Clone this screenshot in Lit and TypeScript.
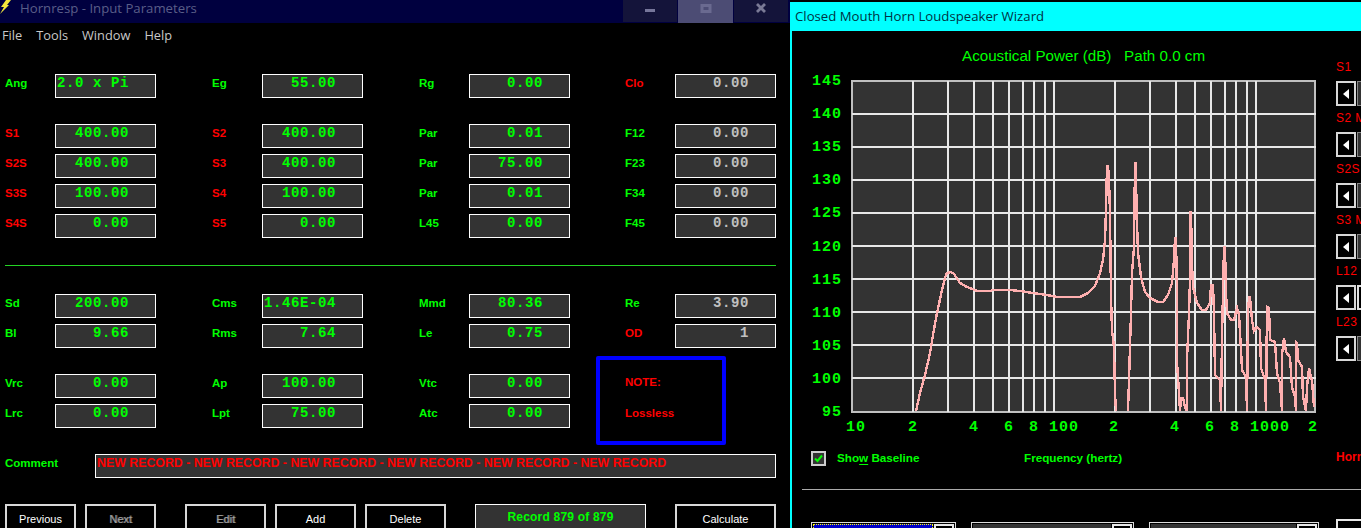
import { LitElement, html, svg, css } from "lit";
import { customElement } from "lit/decorators.js";

type Field = [string, string, string?, string?];

const GROUP_TOP: Field[] = [
  ["Ang", "2.0 x Pi"], ["Eg", "55.00"], ["Rg", "0.00"], ["Clo", "0.00", "red", "dim"],
];
const GROUP_THROAT: Field[] = [
  ["S1", "400.00", "red"], ["S2", "400.00", "red"], ["Par", "0.01"], ["F12", "0.00", "", "dim"],
  ["S2S", "400.00", "red"], ["S3", "400.00", "red"], ["Par", "75.00"], ["F23", "0.00", "", "dim"],
  ["S3S", "100.00", "red"], ["S4", "100.00", "red"], ["Par", "0.01"], ["F34", "0.00", "", "dim"],
  ["S4S", "0.00", "red"], ["S5", "0.00", "red"], ["L45", "0.00"], ["F45", "0.00", "", "dim"],
];
const GROUP_DRIVER: Field[] = [
  ["Sd", "200.00"], ["Cms", "1.46E-04"], ["Mmd", "80.36"], ["Re", "3.90", "", "dim"],
  ["Bl", "9.66"], ["Rms", "7.64"], ["Le", "0.75"], ["OD", "1", "red", "dim"],
];
const GROUP_CHAMBER: Field[] = [
  ["Vrc", "0.00"], ["Ap", "100.00"], ["Vtc", "0.00"],
  ["Lrc", "0.00"], ["Lpt", "75.00"], ["Atc", "0.00"],
];

const SLIDERS = ["S1", "S2 Mmd", "S2S", "S3 Mmd", "L12", "L23"];

const fx = (f: number) => Math.round(852 + 202 * Math.log10(f / 10));
const GRID_FREQS = [20, 30, 40, 50, 60, 70, 80, 90, 100, 200, 300, 400, 500, 600, 700, 800, 900, 1000];
const GRID_DB = [1, 2, 3, 4, 5, 6, 7, 8, 9].map((i) => Math.round(80.5 + i * 33.1));
const Y_LABELS = [145, 140, 135, 130, 125, 120, 115, 110, 105, 100, 95];
const X_LABELS: [string, number][] = [
  ["10", 856], ["2", 913], ["4", 974], ["6", 1009], ["8", 1034], ["100", 1064],
  ["2", 1114], ["4", 1175], ["6", 1210], ["8", 1235], ["1000", 1270], ["2", 1313],
];

// traced from the plot, page coordinates
const CURVE = `916,411 920,393 925,375 930,353 933,335 937,313 942,290 945,278 947,273 951,272 954,274 960,283 967,287
977,291 990,291 993,290 1010,290 1020,291 1033,293 1047,295 1057,297 1080,297 1088,293 1095,286 1100,273 1103,260
1105,240 1106,210 1107,166 1108,166 1109,180 1110,213 1111,297 1112,330 1114,347 1115,393 1116,411 1128,411 1129,380
1130,347 1131,313 1132,273 1134,247 1135,163 1136,163 1136,180 1137,223 1138,253 1141,277 1145,292 1150,298 1158,302
1163,302 1168,295 1172,283 1174,260 1175,238 1176,238 1177,297 1177,362 1179,393 1180,411 1181,398 1183,398 1185,407
1187,411 1187,360 1189,313 1190,280 1190,212 1191,212 1192,263 1193,287 1197,303 1202,310 1206,310 1210,303 1211,285
1213,285 1214,313 1215,375 1220,380 1221,411 1222,337 1223,292 1224,247 1225,247 1226,293 1227,313 1231,320 1234,320
1237,308 1239,315 1241,350 1242,370 1246,377 1247,411 1248,313 1249,297 1250,297 1252,320 1254,331 1257,327 1260,330
1261,368 1265,380 1266,411 1267,307 1269,308 1270,340 1275,342 1277,373 1280,383 1282,411 1282,355 1284,338 1286,352
1290,357 1292,387 1295,397 1296,411 1296,342 1297,343 1298,360 1302,367 1303,397 1306,411 1307,387 1309,368 1311,378
1312,380 1314,407`;

// the curve leaves the plot at the bottom edge, so cut it there instead of running along the axis
function curveSegments(): string[] {
  const segments: string[] = [];
  let current: string[] = [];
  for (const p of CURVE.trim().split(/\s+/)) {
    const atBottom = p.endsWith(",411");
    if (atBottom && current.length === 1 && current[0].endsWith(",411")) {
      current = [p];
      continue;
    }
    current.push(p);
    if (atBottom && current.length > 1) {
      segments.push(current.join(" "));
      current = [p];
    }
  }
  if (current.length > 1) segments.push(current.join(" "));
  return segments;
}

@customElement("app-root")
export class AppRoot extends LitElement {
  static styles = css`
    :host {
      display: flex;
      width: 1361px;
      height: 528px;
      overflow: hidden;
      background: #000;
      font-family: "Liberation Sans", Arial, sans-serif;
    }
    .hornresp {
      width: 790px;
      flex: none;
    }
    .titlebar {
      display: flex;
      height: 23px;
      background: #00003f;
      color: #5a5e88;
      font: 13.2px/16px "Open Sans", sans-serif;
    }
    .bolt {
      width: 20px;
      flex: none;
    }
    .titlebar .caption {
      flex: 1;
    }
    .winbtn {
      width: 54px;
      height: 22px;
      margin-left: 1px;
      background: #14143a;
      display: flex;
      justify-content: center;
    }
    .winbtn.hover {
      width: 55px;
      height: 23px;
      background: #4c4c74;
    }
    .winbtn:last-child {
      margin-right: 2px;
    }
    .menu {
      display: flex;
      gap: 14px;
      height: 24px;
      padding-left: 2px;
      color: #c8c8c8;
      font: 12.8px/24px "Open Sans", sans-serif;
    }
    .fields {
      display: grid;
      grid-template-columns: 207px 207px 206px 151px;
      align-content: start;
      row-gap: 6px;
      padding-left: 5px;
    }
    .fields.top {
      margin-top: 27px;
    }
    .fields.throat {
      margin-top: 26px;
    }
    .fields.driver {
      margin-top: 28px;
    }
    .fields.chamber {
      grid-template-columns: 207px 207px 177px;
      padding-top: 18px;
    }
    .field {
      display: flex;
      align-items: flex-start;
    }
    .label {
      width: 50px;
      color: #00ff00;
      font-size: 11.5px;
      font-weight: bold;
      line-height: 18px;
    }
    .label.red {
      color: #ff0000;
    }
    .value {
      box-sizing: border-box;
      width: 101px;
      height: 24px;
      padding-right: 26px;
      border: 1px solid #fff;
      background: #333;
      color: #00ff00;
      text-align: right;
      font: bold 14px/17px "Liberation Mono", monospace;
      letter-spacing: 0.6px;
      white-space: pre;
    }
    .value.dim {
      color: #c0c0c0;
    }
    .rule {
      height: 1px;
      margin: 27px 14px 0 5px;
      background: #24d424;
    }
    .lower {
      display: flex;
      margin-top: 8px;
    }
    .note {
      box-sizing: border-box;
      width: 130px;
      height: 89px;
      padding: 13px 0 0 25px;
      border: 4px solid #0000ff;
      border-radius: 2px;
      color: #ff0000;
      font-size: 11.5px;
      font-weight: bold;
      line-height: 18px;
    }
    .note div + div {
      margin-top: 13px;
    }
    .comment {
      display: flex;
      margin: 9px 14px 0 5px;
    }
    .comment .label {
      width: 90px;
    }
    .comment .text {
      box-sizing: border-box;
      flex: 1;
      height: 24px;
      padding-left: 1px;
      border: 1px solid #fff;
      background: #333;
      color: #ff0000;
      font-size: 12.35px;
      font-weight: bold;
      line-height: 16px;
      white-space: nowrap;
    }
    .buttons {
      display: flex;
      margin: 26px 0 0 5px;
    }
    .btn {
      box-sizing: border-box;
      width: 71px;
      height: 30px;
      margin-right: 9px;
      border: 2px solid #d8d8d8;
      background: #000;
      color: #fff;
      font-size: 11px;
      line-height: 26px;
      text-align: center;
    }
    .btn.wide {
      width: 81px;
    }
    .btn.next {
      margin-right: 29px;
    }
    .btn.off {
      color: #a0a0a0;
      text-shadow: 1px 0 #666;
    }
    .btn.calc {
      width: 101px;
      margin: 0;
    }
    .record {
      box-sizing: border-box;
      width: 171px;
      height: 30px;
      margin: 0 29px 0 20px;
      border: 1px solid #fff;
      background: #333;
      color: #00ff00;
      font-size: 12px;
      font-weight: bold;
      line-height: 25px;
      text-align: center;
      letter-spacing: 0.2px;
    }

    .wizard {
      flex: 1;
      min-width: 0;
      height: 526px;
      margin-top: 2px;
      border-left: 2px solid #00ffff;
      overflow: hidden;
    }
    .wizard-title {
      height: 29px;
      margin-left: -2px;
      padding-left: 5px;
      background: #00ffff;
      color: #003344;
      font: 13.2px/29px "Open Sans", sans-serif;
    }
    .upper {
      display: flex;
      height: 458px;
    }
    .main {
      width: 544px;
      flex: none;
    }
    .plot-title {
      margin: 16px 0 0 170px;
      color: #00ff00;
      font-size: 15.2px;
      line-height: 18px;
      white-space: pre;
    }
    .plot {
      display: block;
      margin: 5px 0 0 8px;
    }
    .plot .bg {
      fill: #333;
      stroke: #c0c0c0;
      stroke-width: 2;
    }
    .plot .grid {
      stroke: #e8e8e8;
      stroke-width: 2;
    }
    .plot .curve {
      fill: none;
      stroke: #ffb0b0;
      stroke-width: 2.4;
    }
    .plot text {
      fill: #00ff00;
      font: bold 15px "Liberation Mono", monospace;
      letter-spacing: 1px;
    }
    .plot-foot {
      display: flex;
      align-items: center;
      height: 15px;
      margin-top: 13px;
      padding-left: 19px;
      color: #00ff00;
      font-size: 11.7px;
      font-weight: bold;
    }
    .plot-foot div + div {
      margin-top: -2px;
    }
    .check {
      box-sizing: border-box;
      width: 15px;
      height: 15px;
      flex: none;
      border: 2px solid #ccc;
      background: #333;
    }
    .show {
      width: 187px;
      margin-left: 11px;
    }
    .show u {
      text-underline-offset: 2px;
    }
    .sliders {
      flex: 1;
      padding-top: 28px;
      overflow: hidden;
    }
    .slider-label {
      height: 16px;
      color: #ff0000;
      font-size: 12px;
      line-height: 16px;
      white-space: nowrap;
      letter-spacing: 0.4px;
    }
    .slider {
      display: flex;
      width: 30px;
      height: 25px;
      margin: 6px 0 4px;
    }
    .arrow {
      box-sizing: border-box;
      width: 20px;
      height: 25px;
      flex: none;
      border: 2px solid #d8d8d8;
      background: #000;
      display: flex;
      align-items: center;
      justify-content: center;
    }
    .track {
      flex: 1;
      margin-left: 1px;
      border: 1px solid #888;
      background: #333;
    }
    .track.thumb {
      border: 2px solid #e0e0e0;
      background: #000;
    }
    .horn {
      margin-top: 88px;
      color: #ff0000;
      font-size: 12px;
      font-weight: bold;
      line-height: 16px;
    }
    .rule-grey {
      height: 1px;
      margin-left: 10px;
      background: #aaa;
    }
    .scrolls {
      display: flex;
      align-items: flex-start;
      margin-top: 32px;
      padding-left: 19px;
    }
    .scroll {
      box-sizing: border-box;
      display: flex;
      flex: none;
      height: 30px;
      margin-right: 15px;
      padding: 1px;
      border: 1px solid #ddd;
    }
    .scroll .fill {
      flex: 1;
      background: #333;
    }
    .scroll .fill.focus {
      background: #0000c8;
      border: 1px dotted #ffff00;
    }
    .scroll .knob {
      box-sizing: border-box;
      width: 20px;
      margin-left: 1px;
      border: 2px solid #e8e8e8;
      background: #000;
    }
    .stub {
      box-sizing: border-box;
      flex: none;
      width: 40px;
      height: 30px;
      margin: -3px 0 0 2px;
      border: 2px solid #e8e8e8;
    }
  `;

  private field(f: Field) {
    return html`<div class="field">
      <div class="label ${f[2] ?? ""}">${f[0]}</div>
      <div class="value ${f[3] ?? ""}">${f[1]}</div>
    </div>`;
  }

  private plot() {
    const grid = [
      ...GRID_FREQS.map((f) => svg`<line class="grid" x1=${fx(f)} x2=${fx(f)} y1="81" y2="412" />`),
      ...GRID_DB.map((y) => svg`<line class="grid" x1="852" x2="1316" y1=${y} y2=${y} />`),
    ];
    return html`<svg class="plot" width="530" height="368" viewBox="800 70 530 368">
      <rect class="bg" x="852" y="81" width="463" height="331" />
      ${grid}
      ${curveSegments().map(
        (points) => svg`<polyline class="curve" points=${points} shape-rendering="crispEdges" />`,
      )}
      ${Y_LABELS.map(
        (v, i) => svg`<text x="842" y=${85 + i * 33.1} text-anchor="end">${v}</text>`,
      )}
      ${X_LABELS.map(([t, x]) => svg`<text x=${x} y="431" text-anchor="middle">${t}</text>`)}
    </svg>`;
  }

  render() {
    return html`
      <section class="hornresp">
        <div class="titlebar">
          <div class="bolt">
            <svg width="12" height="14" viewBox="0 0 12 14">
              <path d="M6 0H11L7 5H9L0 14L4 7H1Z" fill="#f4e83c" />
            </svg>
          </div>
          <div class="caption">Hornresp - Input Parameters</div>
          <div class="winbtn">
            <svg width="12" height="22" viewBox="0 0 12 22"><rect x="1" y="9" width="10" height="3" fill="#76769a" /></svg>
          </div>
          <div class="winbtn hover">
            <svg width="12" height="22" viewBox="0 0 12 22"><rect x="2" y="5.5" width="8" height="6" fill="none" stroke="#6a6a90" stroke-width="3" /></svg>
          </div>
          <div class="winbtn">
            <svg width="12" height="22" viewBox="0 0 12 22"><path d="M2 4L10 12M10 4L2 12" stroke="#7a7a96" stroke-width="2.8" fill="none" /></svg>
          </div>
        </div>
        <nav class="menu">
          <span>File</span><span>Tools</span><span>Window</span><span>Help</span>
        </nav>

        <div class="fields top">${GROUP_TOP.map((f) => this.field(f))}</div>
        <div class="fields throat">${GROUP_THROAT.map((f) => this.field(f))}</div>
        <div class="rule"></div>
        <div class="fields driver">${GROUP_DRIVER.map((f) => this.field(f))}</div>

        <div class="lower">
          <div class="fields chamber">${GROUP_CHAMBER.map((f) => this.field(f))}</div>
          <div class="note">
            <div>NOTE:</div>
            <div>Lossless</div>
          </div>
        </div>

        <div class="comment">
          <div class="label">Comment</div>
          <div class="text">
            NEW RECORD - NEW RECORD - NEW RECORD - NEW RECORD - NEW RECORD - NEW RECORD
          </div>
        </div>

        <div class="buttons">
          <div class="btn">Previous</div>
          <div class="btn next off">Next</div>
          <div class="btn wide off">Edit</div>
          <div class="btn wide">Add</div>
          <div class="btn wide">Delete</div>
          <div class="record">Record 879 of 879</div>
          <div class="btn calc">Calculate</div>
        </div>
      </section>

      <section class="wizard">
        <div class="wizard-title">Closed Mouth Horn Loudspeaker Wizard</div>
        <div class="upper">
          <div class="main">
            <div class="plot-title">Acoustical Power (dB)   Path 0.0 cm</div>
            ${this.plot()}
            <div class="plot-foot">
              <div class="check">
                <svg width="11" height="11" viewBox="0 0 11 11" style="display:block">
                  <path d="M2 5.5L4.5 8L9 2.5" fill="none" stroke="#00ff00" stroke-width="2" />
                </svg>
              </div>
              <div class="show">Sho<u>w</u> Baseline</div>
              <div>Frequency (hertz)</div>
            </div>
          </div>
          <div class="sliders">
            ${SLIDERS.map(
              (s) => html`<div class="slider-label">${s}</div>
                <div class="slider">
                  <div class="arrow">
                    <svg width="6" height="10" viewBox="0 0 6 10"><path d="M6 0V10L0 5Z" fill="#fff" /></svg>
                  </div>
                  <div class="track ${s === "L12" ? "thumb" : ""}"></div>
                </div>`,
            )}
            <div class="horn">Horn</div>
          </div>
        </div>
        <div class="rule-grey"></div>
        <div class="scrolls">
          <div class="scroll" style="width:145px">
            <div class="fill focus"></div>
            <div class="knob"></div>
          </div>
          <div class="scroll" style="width:163px">
            <div class="fill"></div>
            <div class="knob"></div>
          </div>
          <div class="scroll" style="width:170px">
            <div class="fill"></div>
            <div class="knob"></div>
          </div>
          <div class="stub"></div>
        </div>
      </section>
    `;
  }
}
